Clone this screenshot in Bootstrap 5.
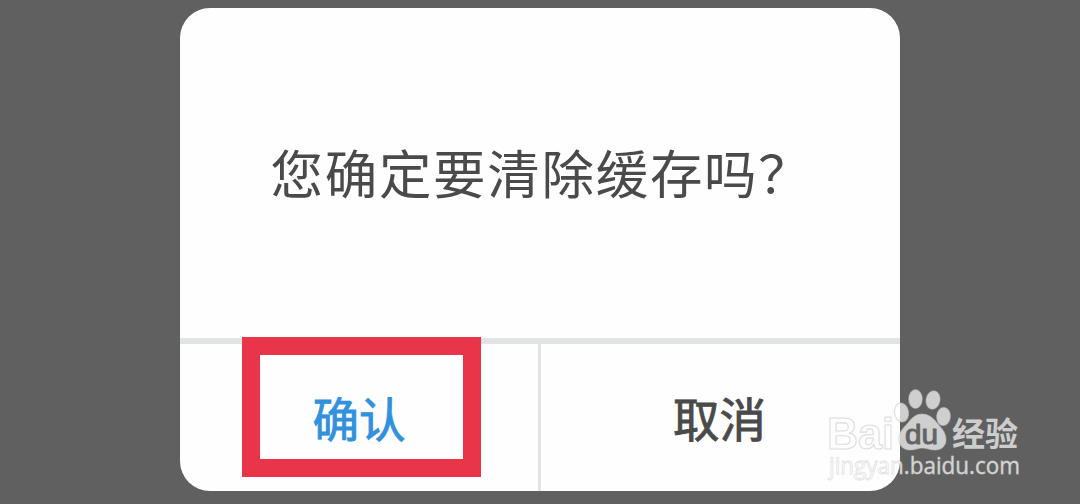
<!DOCTYPE html>
<html lang="zh-CN">
<head>
    <meta charset="UTF-8">
    <meta name="viewport" content="width=device-width, initial-scale=1.0">
    <title>清除缓存</title>
    <link href="https://cdn.jsdelivr.net/npm/bootstrap@5.3.0/dist/css/bootstrap.min.css" rel="stylesheet">
    <style>
        body {
            background: #606060;
            font-family: "Noto Sans CJK SC", sans-serif;
            color: #4a4a4a;
        }
        .dialog-box {
            width: 720px;
            height: 483px;
            margin-top: 8px;
            border-radius: 30px;
            background: #fefefe;
        }
        .dialog-text {
            height: 330px;
            padding-bottom: 3px;
            padding-left: 3px;
            font-size: 52.5px;
            letter-spacing: 1.7px;
            line-height: 1;
        }
        .dialog-actions {
            border-top: 6px solid #e2e4e4;
        }
        .dialog-btn {
            font-size: 46.5px;
            line-height: 1;
            color: #4a4a4a;
            -webkit-text-stroke: .9px currentColor;
            padding: 0 2px 1px 0;
        }
        .dialog-btn.confirm {
            width: 358px;
            padding-right: 0;
            color: #3291dc;
        }
        .dialog-btn.cancel {
            border-left: 3px solid #e2e4e4;
        }
        .highlight {
            left: 62px;
            top: 329px;
            width: 239px;
            height: 140px;
            border: 18px solid #e93549;
            pointer-events: none;
        }
        .watermark {
            left: 820px;
            top: 380px;
        }
    </style>
</head>
<body class="overflow-hidden vh-100 position-relative">
    <div class="dialog-box position-relative mx-auto d-flex flex-column overflow-hidden">
        <div class="dialog-text d-flex align-items-center justify-content-center text-nowrap">您确定要清除缓存吗？</div>
        <div class="dialog-actions d-flex flex-fill">
            <button type="button" class="dialog-btn confirm btn border-0 rounded-0">确认</button>
            <button type="button" class="dialog-btn cancel btn border-top-0 border-end-0 border-bottom-0 rounded-0 flex-fill">取消</button>
        </div>
        <div class="highlight position-absolute"></div>
    </div>

    <svg class="watermark position-absolute" width="220" height="115" viewBox="0 0 220 115">
        <g fill="#fff" fill-opacity=".7" stroke="#c4c4c4" stroke-opacity=".55" stroke-width="1.2">
            <text x="7" y="69" font-family="Liberation Sans" font-weight="700" font-size="45" textLength="67" lengthAdjust="spacingAndGlyphs">Bai</text>
            <!-- paw -->
            <ellipse cx="95.500" cy="19" rx="6.700" ry="9.300"/>
            <ellipse cx="113" cy="20" rx="6.900" ry="9.200" transform="rotate(12 113 20)"/>
            <ellipse cx="81.500" cy="32.500" rx="7" ry="9.500" transform="rotate(-10 81.500 32.500)"/>
            <ellipse cx="123.500" cy="36.500" rx="6.800" ry="9" transform="rotate(5 123.500 36.500)"/>
            <path d="M102 34C95 34 91 39 88 43C84 48 79 51 79 59C79 66 84 70 90 70C95 70 98 68 102 68C107 68 110 70 115 70C122 70 126 65 126 60C126 52 121 48 117 43C114 39 109 34 102 34Z"/>
            <text x="132" y="65.500" font-family="Noto Sans CJK SC" font-weight="700" font-size="33" textLength="66" lengthAdjust="spacingAndGlyphs" stroke="none">经验</text>
        </g>
        <text x="85" y="64" font-family="Liberation Sans" font-size="28" textLength="33" lengthAdjust="spacingAndGlyphs" fill="#646464" stroke="#646464" stroke-width="1">du</text>
        <text x="9" y="93.500" font-family="Open Sans" font-size="23" textLength="191" lengthAdjust="spacingAndGlyphs" fill="#fff" fill-opacity=".75" stroke="#ccc" stroke-opacity=".6" stroke-width=".8">jingyan.baidu.com</text>
    </svg>

    <script src="https://cdn.jsdelivr.net/npm/bootstrap@5.3.0/dist/js/bootstrap.bundle.min.js"></script>
</body>
</html>
